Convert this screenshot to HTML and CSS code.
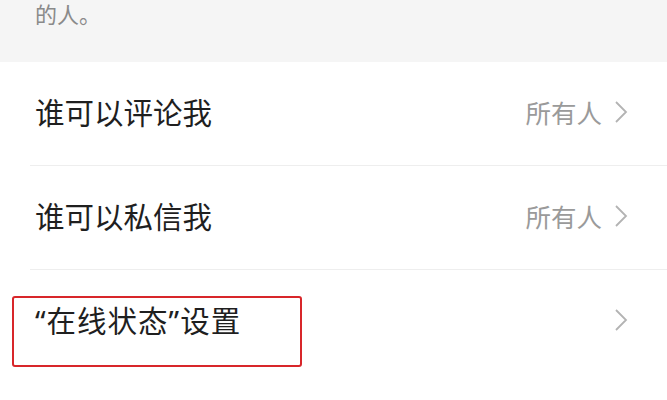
FILE: index.html
```html
<!DOCTYPE html>
<html>
<head>
    <title>隐私设置</title>
    <link rel="stylesheet" href="styles.css">
</head>
<body>
    <div class="desc">的人。</div>

    <div class="list">
        <div class="row">
            <span class="label">谁可以评论我</span>
            <span class="value">所有人</span>
            <svg class="arrow" viewBox="0 0 14 24"><path d="M2 2 L12 12 L2 22" /></svg>
        </div>
        <div class="row">
            <span class="label">谁可以私信我</span>
            <span class="value">所有人</span>
            <svg class="arrow" viewBox="0 0 14 24"><path d="M2 2 L12 12 L2 22" /></svg>
        </div>
        <div class="row last">
            <span class="label wide">“在线状态”设置</span>
            <span class="value"></span>
            <svg class="arrow" viewBox="0 0 14 24"><path d="M2 2 L12 12 L2 22" /></svg>
            <div class="mark"></div>
        </div>
    </div>
</body>
</html>
```

FILE: styles.css
```css
body { margin: 0; background: #fff; font-family: "Noto Sans CJK SC", "Noto Sans", sans-serif; }
.desc { background: #f5f5f5; height: 61px; padding-top: 1px; padding-left: 35px; font-size: 22px; line-height: 24px; color: #8a8a8a; }
.list { background: #fff; }
.row { position: relative; display: flex; align-items: center; height: 99px; padding-bottom: 4px; margin-left: 30px; padding-left: 5px; padding-right: 39px; border-bottom: 1px solid #eeeeee; }
.row.last { border-bottom: none; }
.label { flex: 1; font-family: "Noto Sans", "Noto Sans CJK SC", sans-serif; font-size: 29.5px; color: #1f1f1f; }
.label.wide { letter-spacing: 1px; }
.value { font-size: 25.5px; color: #9a9a9a; margin-right: 12px; }
.arrow { width: 14px; height: 24px; fill: none; stroke: #b3b3b3; stroke-width: 1.8; }
.mark { position: absolute; left: -18px; top: 26px; width: 286px; height: 67px; border: 2px solid #d8262a; border-radius: 3px; }
```
